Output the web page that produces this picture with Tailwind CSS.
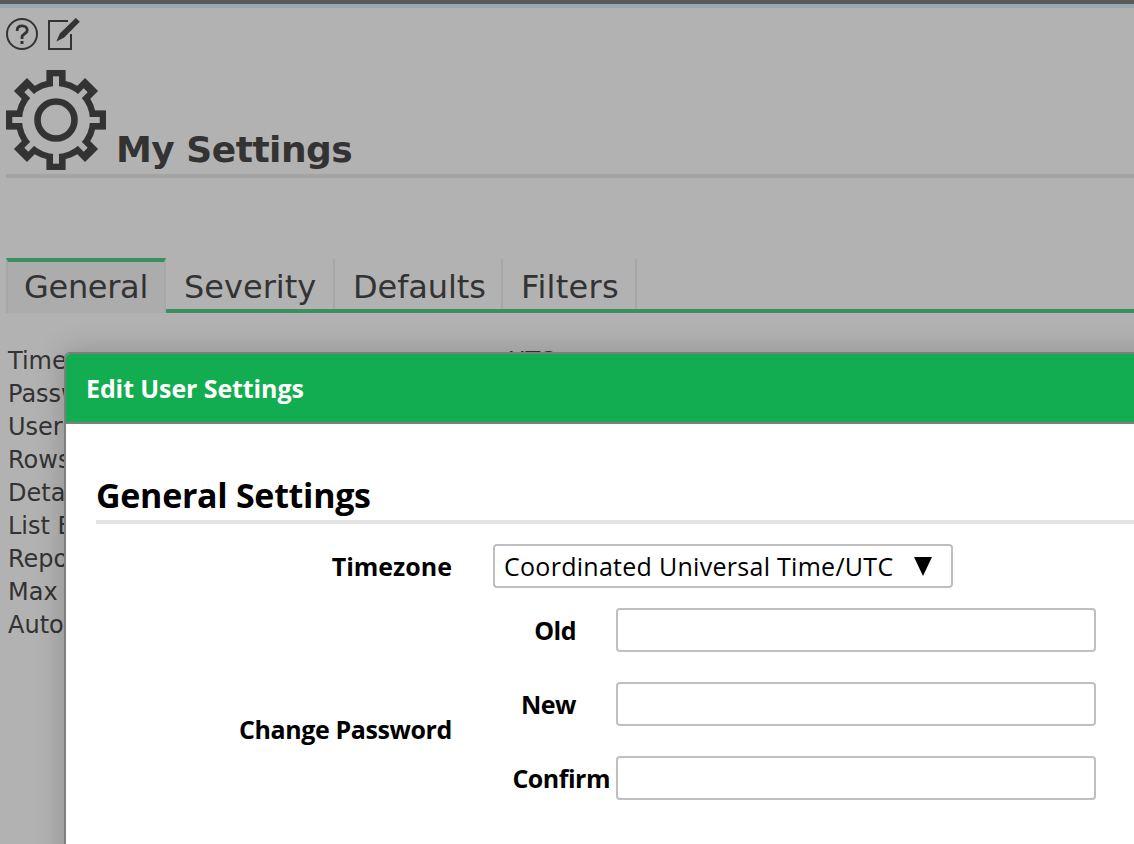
<!DOCTYPE html>
<html lang="en">
<head>
<meta charset="utf-8">
<title>My Settings</title>
<script src="https://cdn.jsdelivr.net/npm/@tailwindcss/browser@4"></script>
</head>
<body class="bg-[#b2b2b2]">
<div class="relative w-[1134px] h-[844px] overflow-hidden bg-[#b2b2b2] font-['DejaVu_Sans',sans-serif] text-[#333333]">
  <div class="h-1 bg-[#5a5a5a]"></div>
  <div class="h-1 bg-[#9ca5b2]"></div>

  <main class="pl-1.5">
    <div class="flex gap-2.5 pt-2.5">
      <svg class="size-8" viewBox="0 0 32 32" fill="none" stroke="#333333">
        <circle cx="16" cy="16" r="15" stroke-width="2"/>
        <path d="M11.2 13V12.2C11.2 9.2 13.2 7.8 16.2 7.8S21.3 9.6 21.3 12.2C21.3 15.8 16 15.6 16 19.2V21" stroke-width="2.8"/>
        <path d="M16 23V26" stroke-width="3"/>
      </svg>
      <svg class="size-8" viewBox="0 0 32 32">
        <path d="M20 3H1V31H23V16" fill="none" stroke="#333333" stroke-width="2"/>
        <path d="M27.8 0L31.8 3.8L16.2 19.5L8.4 23.6L11.8 15.6Z" fill="#333333"/>
      </svg>
    </div>

    <header class="flex items-end mt-5 h-[108px] border-b-4 border-[#a4a4a4] pb-1">
      <svg class="w-[100px] h-[100px] shrink-0" viewBox="-50 -50 100 100">
        <g fill="#333333">
          <circle r="40.3"/>
          <rect x="-9.6" y="-50" width="19.2" height="100"/>
          <rect x="-50" y="-9.6" width="100" height="19.2"/>
          <rect x="-9.2" y="-50.3" width="18.4" height="100.6" transform="rotate(45)"/>
          <rect x="-9.2" y="-50.3" width="18.4" height="100.6" transform="rotate(-45)"/>
        </g>
        <g fill="#b2b2b2">
          <circle r="34"/>
          <rect x="-3" y="-43.7" width="6" height="87.4"/>
          <rect x="-43.7" y="-3" width="87.4" height="6"/>
          <rect x="-2.8" y="-42" width="5.6" height="84" transform="rotate(45)"/>
          <rect x="-2.8" y="-42" width="5.6" height="84" transform="rotate(-45)"/>
        </g>
        <circle r="18.5" fill="none" stroke="#333333" stroke-width="6.6"/>
      </svg>
      <h1 class="ml-[10px] -mb-px text-[36px] leading-[42px] font-bold whitespace-nowrap tracking-[-0.5px]"><span>My Settings</span></h1>
    </header>

    <nav class="flex mt-20 text-[32px] leading-[47px] whitespace-nowrap">
      <div class="w-40 h-[55px] border-t-4 border-x-2 border-t-[#3c8f5e] border-x-[#a7a7a7] bg-[#acacac] pl-4 pt-[2px] tracking-[-0.3px]"><span>General</span></div>
      <div class="flex flex-1 h-[55px] border-b-4 border-[#3c8f5e] pt-[1px]">
        <div class="w-[169px] border-r-2 border-[#a7a7a7] pl-[18px] pt-[5px]"><span>Severity</span></div>
        <div class="w-[168px] border-r-2 border-[#a7a7a7] pl-[18px] pt-[5px] tracking-[-0.1px]"><span>Defaults</span></div>
        <div class="w-[134px] border-r-2 border-[#a7a7a7] pl-[18px] pt-[5px] tracking-[0.3px]"><span>Filters</span></div>
      </div>
    </nav>

    <div class="grid grid-cols-[500px_1fr] pl-0.5 mt-8 text-[24px] leading-[33px] whitespace-nowrap">
      <span>Time</span><span>UTC</span>
      <span class="col-span-2">Passw</span>
      <span class="col-span-2">User</span>
      <span class="col-span-2">Rows</span>
      <span class="col-span-2">Deta</span>
      <span class="col-span-2">List E</span>
      <span class="col-span-2">Repo</span>
      <span class="col-span-2">Max</span>
      <span class="col-span-2">Auto</span>
    </div>
  </main>

  <section class="absolute left-16 top-[352px] w-[1200px] h-[600px] bg-white border-2 border-[#7f7f7f] rounded-md overflow-hidden shadow-[0_0_30px_rgba(0,0,0,0.2)] text-black font-['Open_Sans',sans-serif] whitespace-nowrap">
    <div class="h-[70px] border-b-2 border-[#7f7f7f] bg-[#12ad50] pl-5 text-white text-[25px] leading-[69px] font-bold tracking-[-0.1px]"><span>Edit User Settings</span></div>
    <div class="pl-[30px] pt-[47px]">
      <h2 class="h-[53px] border-b-4 border-[#e3e3e3] text-[34px] leading-[49px] font-bold tracking-[-0.3px]"><span>General Settings</span></h2>
      <div class="grid grid-cols-[356px_1fr] gap-x-[41px] mt-5 text-[25px] font-bold">
        <div class="h-11 leading-[44px] text-right"><span>Timezone</span></div>
        <div class="flex items-center w-[460px] h-11 border-2 border-[#bfbfbf] rounded pl-[9px] font-normal tracking-[0.28px]"><span class="mt-px">Coordinated Universal Time/UTC</span>
          <svg class="ml-auto mr-[19px] w-[18px] h-[19px]" viewBox="0 0 18 19"><path d="M0 0H18L9 19Z"/></svg>
        </div>
        <div class="mt-5 h-[242px] leading-[242px] text-right tracking-[-0.4px]"><span>Change Password</span></div>
        <div class="mt-5 flex flex-col gap-[30px] leading-[44px] tracking-[-0.5px]">
          <div class="flex"><div class="w-[83px] mr-10 text-right"><span>Old</span></div><div class="w-[480px] h-11 border-2 border-[#bfbfbf] rounded"></div></div>
          <div class="flex"><div class="w-[83px] mr-10 text-right"><span>New</span></div><div class="w-[480px] h-11 border-2 border-[#bfbfbf] rounded"></div></div>
          <div class="flex"><div class="w-[117px] mr-1.5 text-right"><span>Confirm</span></div><div class="w-[480px] h-11 border-2 border-[#bfbfbf] rounded"></div></div>
        </div>
      </div>
    </div>
  </section>
</div>
</body>
</html>
